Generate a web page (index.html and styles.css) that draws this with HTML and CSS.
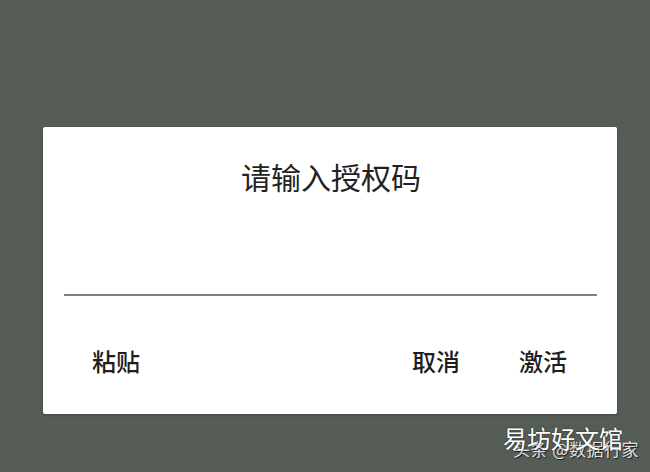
FILE: index.html
```html
<!DOCTYPE html>
<html lang="zh">
<head>
<meta charset="utf-8">
<link rel="stylesheet" href="styles.css">
</head>
<body>
<div class="screen">
  <div class="dialog">
    <div class="title">请输入授权码</div>
    <div class="input"></div>
    <div class="actions">
      <span class="btn">粘贴</span>
      <span class="spacer"></span>
      <span class="btn">取消</span>
      <span class="btn">激活</span>
    </div>
  </div>
  <div class="wm-sub">头条 @数据行家</div>
  <div class="wm-main">易坊好文馆</div>
</div>
</body>
</html>
```
FILE: styles.css
```css
html, body {
  margin: 0;
  padding: 0;
  background: #565d57;
}
.screen {
  position: relative;
  width: 650px;
  height: 472px;
  overflow: hidden;
  padding-top: 127px;
  box-sizing: border-box;
  font-family: "Noto Sans CJK SC", "Noto Sans", sans-serif;
}
.dialog {
  margin-left: 43px;
  width: 574px;
  height: 287px;
  background: #ffffff;
  border-radius: 2px;
  box-shadow: 0 1px 3px rgba(0,0,0,0.25);
  display: flex;
  flex-direction: column;
}
.title {
  margin-top: 34px;
  font-size: 30px;
  line-height: 30px;
  text-align: center;
  color: #222;
  padding-left: 2px;
}
.input {
  margin: 103px 20px 0 21px;
  height: 0;
  border-bottom: 2px solid #808080;
}
.actions {
  display: flex;
  margin-top: 53px;
  padding: 0 50px 0 49px;
  gap: 59px;
}
.spacer { flex: 1; margin-left: -59px; }
.btn {
  font-size: 24px;
  line-height: 24px;
  font-weight: 500;
  color: #1e1e1e;
}
.wm-main {
  position: absolute;
  left: 503px;
  top: 425px;
  font-size: 24px;
  line-height: 25px;
  color: #fff;
  text-shadow: 0 0 2px rgba(0,0,0,0.6);
}
.wm-sub {
  position: absolute;
  left: 513px;
  top: 440px;
  font-size: 17px;
  line-height: 18px;
  letter-spacing: 0.5px;
  color: rgba(255,255,255,0.85);
  text-shadow: 1px 1px 1px rgba(0,0,0,0.7);
}
```
